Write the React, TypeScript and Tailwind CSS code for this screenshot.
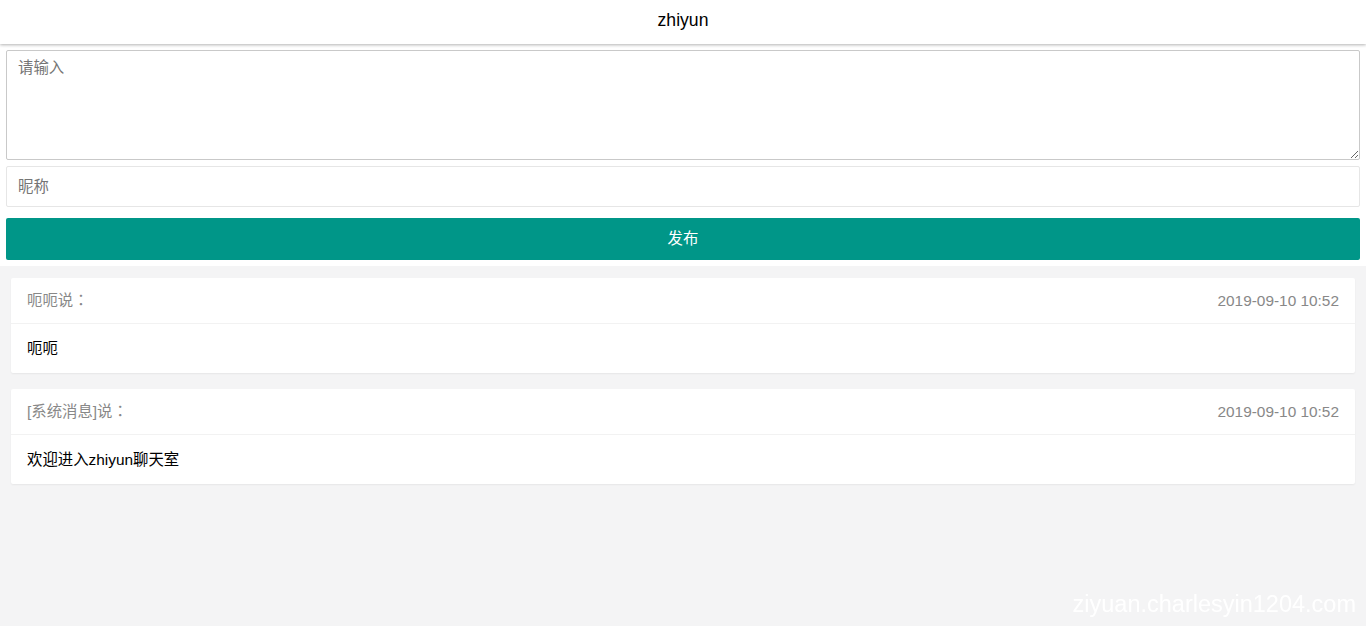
// Chat room page — header, post form, message cards
const messages = [
  { from: "呃呃说", time: "2019-09-10 10:52", text: "呃呃" },
  { from: "[系统消息]说", time: "2019-09-10 10:52", text: "欢迎进入zhiyun聊天室" },
];

export default function App() {
  return (
    <div
      className="relative min-h-screen bg-[#f4f4f5] text-[15.4px] text-black"
      style={{ fontFamily: '"Liberation Sans", "Noto Sans CJK SC", sans-serif' }}
    >
      <header className="relative z-10 flex h-[44px] items-center justify-center bg-white pb-[4px] text-[17.6px] shadow-[0_1px_3px_rgba(0,0,0,0.3)]">
        zhiyun
      </header>

      <div className="flex flex-col bg-white p-[6px]">
        <textarea
          placeholder="请输入"
          className="h-[110px] w-full rounded-[2px] border border-[#c9c9c9] px-[11px] py-[7px] leading-[20px] outline-none placeholder:text-[#757575]"
        />
        <input
          placeholder="昵称"
          className="mt-[6px] h-[41px] w-full rounded-[2px] border border-[#e6e6e6] px-[11px] outline-none placeholder:text-[#757575]"
        />
        <button className="mt-[11px] h-[42px] w-full rounded-[2px] bg-[#009688] text-white">
          发布
        </button>
      </div>

      <div className="flex flex-col gap-[16px] px-[11px] pt-[12px]">
        {messages.map((m, i) => (
          <div key={i} className="rounded-[2px] bg-white shadow-[0_1px_2px_rgba(0,0,0,0.06)]">
            <div className="flex h-[46px] items-center justify-between border-b border-[#f2f2f2] px-[16px] text-[#888]">
              <span>
                {m.from}
                <span style={{ fontFamily: '"Noto Sans CJK TC", sans-serif' }}>：</span>
              </span>
              <span>{m.time}</span>
            </div>
            <div className="flex h-[49px] items-center px-[16px]">{m.text}</div>
          </div>
        ))}
      </div>

      <div className="pointer-events-none fixed right-[10px] bottom-[4px] text-[23.5px] text-white">
        ziyuan.charlesyin1204.com
      </div>
    </div>
  );
}
